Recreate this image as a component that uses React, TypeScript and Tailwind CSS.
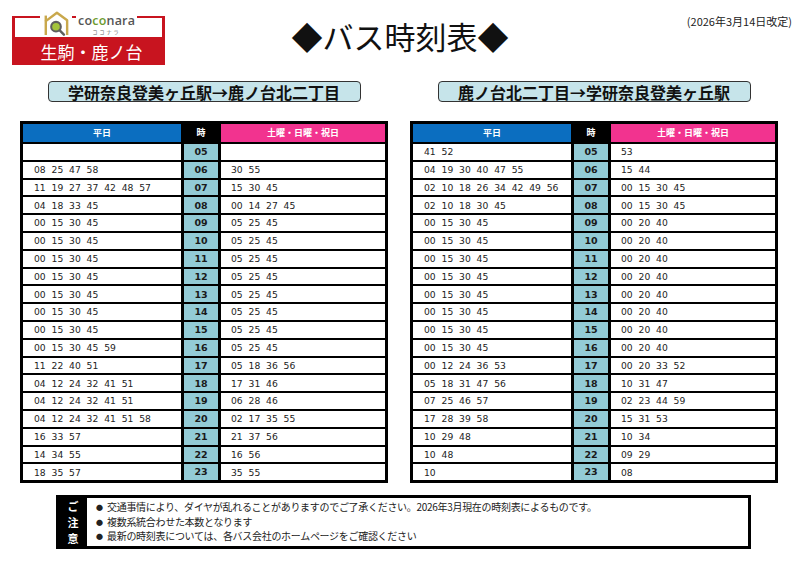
import React from 'react';

type Row = { h: string; wd: string; hd: string };

const toRows = (wd: string[], hd: string[]): Row[] =>
  wd.map((w, i) => ({ h: String(i + 5).padStart(2, '0'), wd: w, hd: hd[i] }));

const leftRows = toRows(
  [
    '',
    '08 25 47 58',
    '11 19 27 37 42 48 57',
    '04 18 33 45',
    '00 15 30 45',
    '00 15 30 45',
    '00 15 30 45',
    '00 15 30 45',
    '00 15 30 45',
    '00 15 30 45',
    '00 15 30 45',
    '00 15 30 45 59',
    '11 22 40 51',
    '04 12 24 32 41 51',
    '04 12 24 32 41 51',
    '04 12 24 32 41 51 58',
    '16 33 57',
    '14 34 55',
    '18 35 57',
  ],
  [
    '',
    '30 55',
    '15 30 45',
    '00 14 27 45',
    '05 25 45',
    '05 25 45',
    '05 25 45',
    '05 25 45',
    '05 25 45',
    '05 25 45',
    '05 25 45',
    '05 25 45',
    '05 18 36 56',
    '17 31 46',
    '06 28 46',
    '02 17 35 55',
    '21 37 56',
    '16 56',
    '35 55',
  ],
);

const rightRows = toRows(
  [
    '41 52',
    '04 19 30 40 47 55',
    '02 10 18 26 34 42 49 56',
    '02 10 18 30 45',
    '00 15 30 45',
    '00 15 30 45',
    '00 15 30 45',
    '00 15 30 45',
    '00 15 30 45',
    '00 15 30 45',
    '00 15 30 45',
    '00 15 30 45',
    '00 12 24 36 53',
    '05 18 31 47 56',
    '07 25 46 57',
    '17 28 39 58',
    '10 29 48',
    '10 48',
    '10',
  ],
  [
    '53',
    '15 44',
    '00 15 30 45',
    '00 15 30 45',
    '00 20 40',
    '00 20 40',
    '00 20 40',
    '00 20 40',
    '00 20 40',
    '00 20 40',
    '00 20 40',
    '00 20 40',
    '00 20 33 52',
    '10 31 47',
    '02 23 44 59',
    '15 31 53',
    '10 34',
    '09 29',
    '08',
  ],
);

const jp = "font-['Noto_Sans_CJK_JP',sans-serif]";
const num = "font-['DejaVu_Sans',sans-serif]";

const spaced = (s: string) => s.split(' ').join('  ');

const Logo = () => (
  <div className="flex w-[153px] flex-col">
    <div className="mt-[5px] flex h-[21px] border-x-[3px] border-t-2 border-[#c8141f] bg-white pl-[25px]">
      <div className="-mt-[8px] self-start bg-white px-[1px]">
        <svg width="30" height="26" viewBox="0 0 30 28">
          <path d="M4 27 V12 L16 3 L27 11 V27" fill="none" stroke="#c9a84c" strokeWidth="2.6" strokeLinejoin="round" />
          <path d="M4 12 V6" stroke="#c9a84c" strokeWidth="2.6" />
          <circle cx="15" cy="18" r="5.2" fill="#a3c43c" stroke="#5e5e5e" strokeWidth="2.2" />
          <path d="M19 22 L23.5 26.5" stroke="#5e5e5e" strokeWidth="2.6" strokeLinecap="round" />
        </svg>
      </div>
      <div className="ml-[4px] -mt-[3px] flex flex-col items-center self-start bg-white px-[2px]">
        <span className="font-['Open_Sans',sans-serif] text-[12.5px] font-semibold leading-[12px] tracking-[0.2px] text-[#555]">
          co<span className="text-[#6c9a2e]">co</span>nara
        </span>
        <span className={`${jp} mt-[2px] text-[5px] leading-[6px] tracking-[2px] text-[#666]`}>ココナラ</span>
      </div>
    </div>
    <div className={`${jp} flex h-[28px] items-center justify-center bg-[#c8141f] pl-[6px] text-[17px] leading-none text-white`}>
      生駒・鹿ノ台
    </div>
  </div>
);

const cellBase = 'flex items-center bg-white text-[9.2px] leading-none text-[#222]';

const Timetable = ({ rows }: { rows: Row[] }) => (
  <div className="grid grid-cols-[158px_34px_164px] gap-x-[3px] gap-y-[2px] bg-black p-[3px]">
    <div className={`${jp} flex h-[18px] items-center justify-center bg-[#0b6ec0] text-[9px] font-bold text-white`}>平日</div>
    <div className={`${jp} flex h-[18px] items-center justify-center text-[9px] font-bold text-white`}>時</div>
    <div className={`${jp} flex h-[18px] items-center justify-center bg-[#f2338f] text-[9px] font-bold text-white`}>
      土曜・日曜・祝日
    </div>
    {rows.map((r) => (
      <React.Fragment key={r.h}>
        <div className={`${cellBase} ${num} h-[15.8px] whitespace-pre pl-[11px]`}>{spaced(r.wd)}</div>
        <div className={`${num} flex h-[15.8px] items-center justify-center bg-[#93cbd6] text-[9.5px] font-bold leading-none text-[#1a1a1a]`}>
          {r.h}
        </div>
        <div className={`${cellBase} ${num} h-[15.8px] whitespace-pre pl-[10px]`}>{spaced(r.hd)}</div>
      </React.Fragment>
    ))}
  </div>
);

const RouteLabel = ({ text }: { text: string }) => (
  <div className="flex justify-center">
    <div
      className={`${jp} flex h-[21px] w-[313px] items-center justify-center rounded-[4px] border-[1.5px] border-[#333] bg-[#c6e4ea] text-[16px] font-bold leading-none text-[#111]`}
    >
      {text}
    </div>
  </div>
);

const notes = [
  '交通事情により、ダイヤが乱れることがありますのでご了承ください。2026年3月現在の時刻表によるものです。',
  '複数系統合わせた本数となります',
  '最新の時刻表については、各バス会社のホームページをご確認ください',
];

export default function App() {
  return (
    <div className="h-[565px] w-[800px] overflow-hidden bg-white">
      <div className="grid grid-cols-[1fr_auto_1fr] pt-[11px]">
        <div className="pl-[12px]">
          <Logo />
        </div>
        <div className={`${jp} flex items-center pb-[6px] text-[31px] leading-none text-[#111]`}>◆バス時刻表◆</div>
        <div className={`${jp} flex justify-end pr-[8px] pt-[2px] text-[11px] leading-[16px] text-[#222]`}>
          (2026年3月14日改定)
        </div>
      </div>

      <div className="mt-[16px] grid grid-cols-[368px_368px] gap-x-[22px] px-[20px]">
        <RouteLabel text="学研奈良登美ヶ丘駅→鹿ノ台北二丁目" />
        <RouteLabel text="鹿ノ台北二丁目→学研奈良登美ヶ丘駅" />
      </div>

      <div className="mt-[19px] grid grid-cols-[368px_368px] gap-x-[22px] px-[20px]">
        <Timetable rows={leftRows} />
        <Timetable rows={rightRows} />
      </div>

      <div className="ml-[56px] mt-[12px] flex h-[54px] w-[695px] border-[3px] border-black">
        <div className={`${jp} flex w-[28px] flex-col items-center justify-center bg-black text-[11px] font-bold leading-[16px] text-white`}>
          <span>ご</span>
          <span>注</span>
          <span>意</span>
        </div>
        <div className={`${jp} flex flex-col justify-center pl-[9px] text-[10px] leading-[14.5px] tracking-[-0.3px] text-[#222]`}>
          {notes.map((n) => (
            <div key={n} className="flex items-center">
              <span className="w-[11px] text-[7px] leading-none">●</span>
              <span>{n}</span>
            </div>
          ))}
        </div>
      </div>
    </div>
  );
}
